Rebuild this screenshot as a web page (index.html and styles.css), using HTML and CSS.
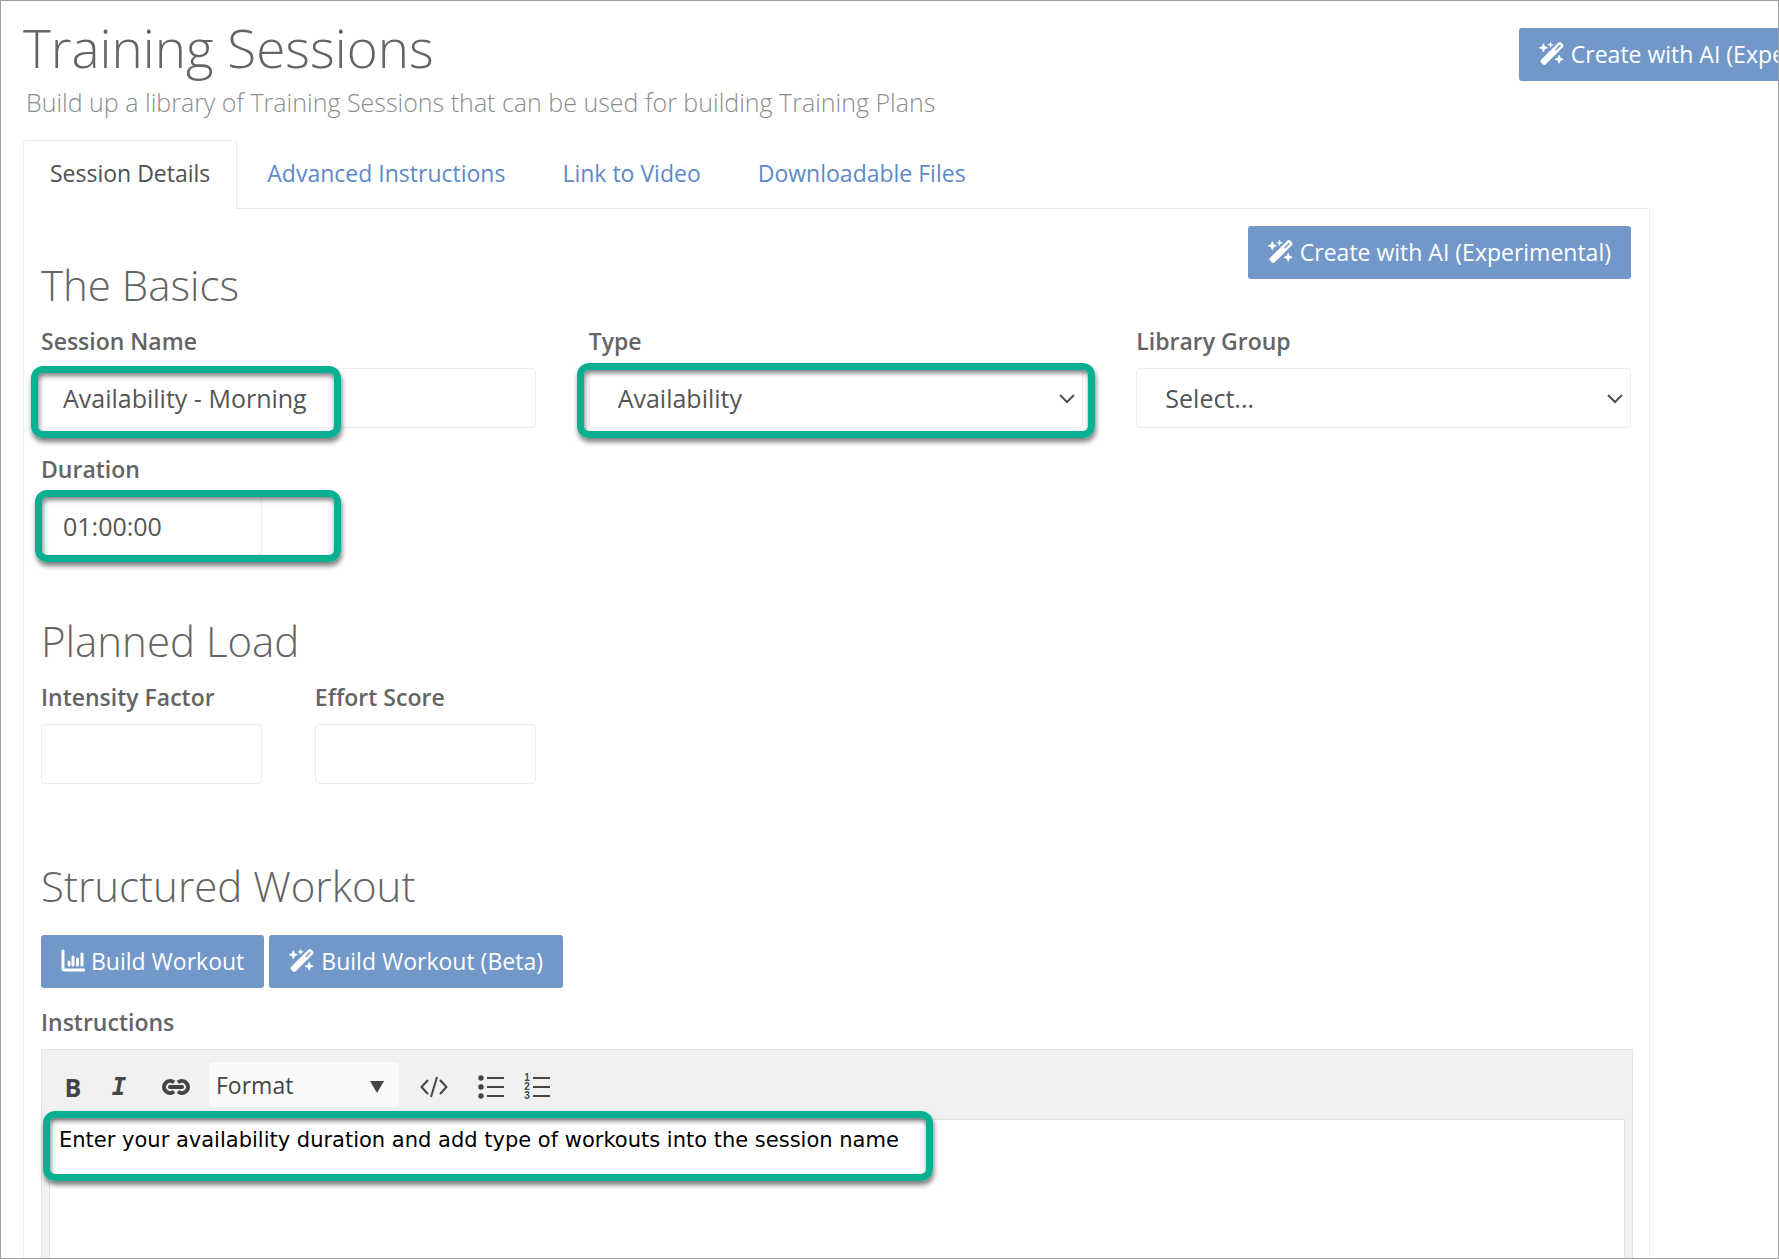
FILE: index.html
```html
<!DOCTYPE html>
<html lang="en">
<head>
    <meta charset="UTF-8">
    <meta name="viewport" content="width=device-width, initial-scale=1.0">
    <title>Training Sessions</title>
    <link rel="stylesheet" href="styles.css">
</head>
<body>
    <!-- shared icons -->
    <svg class="sprite" aria-hidden="true">
        <symbol id="wand" viewBox="0 0 576 512">
            <path d="M234.7 42.7L197 56.8c-3 1.1-5 4-5 7.2s2 6.1 5 7.2l37.7 14.1L248.8 123c1.1 3 4 5 7.2 5s6.1-2 7.2-5l14.1-37.7L315 71.2c3-1.1 5-4 5-7.2s-2-6.1-5-7.2L277.3 42.7 263.2 5c-1.1-3-4-5-7.2-5s-6.1 2-7.2 5L234.7 42.7zM46.1 395.4c-18.7 18.7-18.7 49.1 0 67.9l34.6 34.6c18.7 18.7 49.1 18.7 67.9 0L529.9 116.5c18.7-18.7 18.7-49.1 0-67.9L495.3 14.1c-18.7-18.7-49.1-18.7-67.9 0L46.1 395.4zM484.6 82.6l-105 105-23.3-23.3 105-105 23.3 23.3zM7.5 117.2C3 118.9 0 123.2 0 128s3 9.1 7.5 10.8L64 160l21.2 56.5c1.7 4.5 6 7.5 10.8 7.5s9.1-3 10.8-7.5L128 160l56.5-21.2c4.5-1.7 7.5-6 7.5-10.8s-3-9.1-7.5-10.8L128 96 106.8 39.5C105.1 35 100.8 32 96 32s-9.1 3-10.8 7.5L64 96 7.5 117.2zm352 256c-4.5 1.7-7.5 6-7.5 10.8s3 9.1 7.5 10.8L416 416l21.2 56.5c1.7 4.5 6 7.5 10.8 7.5s9.1-3 10.8-7.5L480 416l56.5-21.2c4.5-1.7 7.5-6 7.5-10.8s-3-9.1-7.5-10.8L480 352l-21.2-56.5c-1.7-4.5-6-7.5-10.8-7.5s-9.1 3-10.8 7.5L416 352l-56.5 21.2z"/>
        </symbol>
        <symbol id="chart" viewBox="0 0 24 24">
            <path d="M2 2v17.5a1.5 1.5 0 0 0 1.500 1.500H23" fill="none" stroke="currentColor" stroke-width="3" stroke-linecap="round"/>
            <path d="M8 13v3M12 8v8M16.500 10v6M21 5v11" fill="none" stroke="currentColor" stroke-width="3" stroke-linecap="round"/>
        </symbol>
    </svg>

    <div class="page">
        <header class="page-header">
            <div>
                <h1>Training Sessions</h1>
                <p class="subtitle">Build up a library of Training Sessions that can be used for building Training Plans</p>
            </div>
            <button type="button" class="btn"><svg class="icon-wand"><use href="#wand"/></svg>Create with AI (Experimental)</button>
        </header>

        <main class="content">
            <nav class="tabs">
                <a href="#details" class="tab active">Session Details</a>
                <a href="#advanced" class="tab">Advanced Instructions</a>
                <a href="#video" class="tab">Link to Video</a>
                <a href="#files" class="tab">Downloadable Files</a>
            </nav>

            <form class="panel" id="details">
                <section>
                    <div class="section-head">
                        <h2>The Basics</h2>
                        <button type="button" class="btn"><svg class="icon-wand"><use href="#wand"/></svg>Create with AI (Experimental)</button>
                    </div>
                    <div class="row">
                        <div class="field">
                            <label for="name">Session Name</label>
                            <div class="control">
                                <input type="text" id="name" value="Availability - Morning">
                                <span class="highlight hl-name"></span>
                            </div>
                        </div>
                        <div class="field">
                            <label for="type">Type</label>
                            <div class="control">
                                <select id="type"><option>Availability</option></select>
                                <svg class="chevron" viewBox="0 0 16 10"><path d="M1 1l7 7 7-7"/></svg>
                                <span class="highlight hl-type"></span>
                            </div>
                        </div>
                        <div class="field">
                            <label for="group">Library Group</label>
                            <div class="control">
                                <select id="group"><option>Select...</option></select>
                                <svg class="chevron" viewBox="0 0 16 10"><path d="M1 1l7 7 7-7"/></svg>
                            </div>
                        </div>
                        <div class="field half">
                            <label for="duration">Duration</label>
                            <div class="control">
                                <input type="text" id="duration" value="01:00:00">
                                <span class="highlight hl-duration"></span>
                            </div>
                        </div>
                    </div>
                </section>

                <section class="load">
                    <h2>Planned Load</h2>
                    <div class="row">
                        <div class="pair">
                            <div class="field">
                                <label for="intensity">Intensity Factor</label>
                                <input type="text" id="intensity">
                            </div>
                            <div class="field">
                                <label for="effort">Effort Score</label>
                                <input type="text" id="effort">
                            </div>
                        </div>
                    </div>
                </section>

                <section class="workout">
                    <h2>Structured Workout</h2>
                    <div class="buttons">
                        <button type="button" class="btn"><svg class="icon-chart"><use href="#chart"/></svg>Build Workout</button>
                        <button type="button" class="btn"><svg class="icon-wand"><use href="#wand"/></svg>Build Workout (Beta)</button>
                    </div>
                    <label for="instructions">Instructions</label>
                    <div class="editor">
                        <div class="toolbar">
                            <button type="button" class="tool" aria-label="Bold"><b>B</b></button>
                            <button type="button" class="tool" aria-label="Italic"><i>I</i></button>
                            <button type="button" class="tool tool-link" aria-label="Link">
                                <svg width="28" height="16" viewBox="0 0 28 16" fill="none" stroke="currentColor" stroke-width="4"><path d="M12 3.5A6 6 0 1 0 12 12.5M16 3.5A6 6 0 1 1 16 12.5"/><path d="M8 8h12" stroke-linecap="round"/></svg>
                            </button>
                            <div class="format">
                                <select aria-label="Format"><option>Format</option></select>
                                <svg class="arrow" viewBox="0 0 14 12"><path d="M0 0h14L7 12z"/></svg>
                            </div>
                            <button type="button" class="tool tool-code" aria-label="Source">
                                <svg width="28" height="22" viewBox="0 0 28 22" fill="none" stroke="currentColor" stroke-width="2"><path d="M8 4L1.5 11 8 18M20 4l6.5 7-6.5 7M17 1l-6 20"/></svg>
                            </button>
                            <button type="button" class="tool" aria-label="Bulleted list">
                                <svg width="26" height="24" viewBox="0 0 26 24" fill="currentColor"><circle cx="3" cy="3" r="2.700"/><circle cx="3" cy="12" r="2.700"/><circle cx="3" cy="21" r="2.700"/><path d="M9 2h17v2H9zM9 11h17v2H9zM9 20h17v2H9z"/></svg>
                            </button>
                            <button type="button" class="tool" aria-label="Numbered list">
                                <span class="nums"><span>1</span><span>2</span><span>3</span></span>
                                <svg width="17" height="24" viewBox="9 0 17 24" fill="currentColor"><path d="M9 2h17v2H9zM9 11h17v2H9zM9 20h17v2H9z"/></svg>
                            </button>
                        </div>
                        <div class="control">
                            <textarea id="instructions" rows="10">Enter your availability duration and add type of workouts into the session name</textarea>
                            <span class="highlight hl-text"></span>
                        </div>
                    </div>
                </section>
            </form>
        </main>
    </div>
</body>
</html>
```
FILE: styles.css
```css
* {
    box-sizing: border-box;
}
body {
    margin: 0;
    background-color: #fff;
    color: #646464;
    font-family: "Open Sans", Arial, sans-serif;
    font-size: 23px;
    line-height: 32px;
}
h1, h2, p {
    margin: 0;
    font-weight: 300;
}
h1 {
    font-size: 53px;
    line-height: 60px;
}
h2 {
    font-size: 42px;
    line-height: 48px;
    margin-bottom: 16px;
}
input, select, textarea, button {
    font-family: inherit;
    font-size: inherit;
    color: inherit;
}
.sprite {
    display: none;
}
.page {
    height: 100vh;
    overflow: hidden;
    border: 1px solid #a0a0a0;
}

/* header */
.page-header {
    display: flex;
    justify-content: space-between;
    align-items: flex-start;
    padding: 17px 0 22px 22px;
    margin-right: -124px;
}
.page-header .btn {
    margin-top: 10px;
}
.page-header > div {
    flex: 1;
}
.subtitle {
    margin-top: 8px;
    padding-left: 3px;
    font-size: 25px;
    color: #8c8c8c;
}

.btn {
    display: inline-flex;
    align-items: center;
    gap: 6px;
    height: 53px;
    padding: 0 20px 2px;
    border: none;
    border-radius: 3px;
    background-color: #7298c9;
    color: #fff;
    white-space: nowrap;
    cursor: pointer;
}
.icon-wand {
    width: 26px;
    height: 23px;
    fill: currentColor;
}
.icon-chart {
    width: 24px;
    height: 24px;
}

/* tabs */
.content {
    margin: 0 128px 0 22px;
}
.tabs {
    display: flex;
    gap: 3px;
}
.tab {
    padding: 16px 26px 19px;
    border: 1px solid transparent;
    border-bottom: none;
    color: #5d8ac7;
    text-decoration: none;
}
.tab.active {
    position: relative;
    margin-bottom: -1px;
    padding-bottom: 20px;
    border-color: #ededed;
    border-radius: 4px 4px 0 0;
    background-color: #fff;
    color: #505050;
}
.panel {
    padding: 17px 18px 17px 17px;
    border: 1px solid #ededed;
}

/* form */
.section-head {
    display: flex;
    justify-content: space-between;
    align-items: flex-start;
}
.section-head h2 {
    margin-top: 35px;
}
.load {
    margin-top: 61px;
}
.workout {
    margin-top: 78px;
}
.row {
    display: grid;
    grid-template-columns: repeat(3, 1fr);
    gap: 25px 53px;
}
.pair {
    display: grid;
    grid-template-columns: 1fr 1fr;
    gap: 53px;
}
label {
    display: block;
    margin-bottom: 11px;
    font-weight: 600;
}
.control {
    position: relative;
}
.field input, .field select {
    display: block;
    width: 100%;
    height: 60px;
    padding: 0 21px;
    border: 1px solid #ededed;
    border-radius: 4px;
    background-color: #fff;
    font-size: 25px;
    color: #555;
    appearance: none;
}
.field select {
    padding-left: 28px;
}
.half input {
    width: calc(50% - 26px);
}
.chevron {
    position: absolute;
    right: 8px;
    top: 26px;
    width: 16px;
    height: 10px;
    fill: none;
    stroke: #505050;
    stroke-width: 2;
    pointer-events: none;
}
.buttons {
    display: flex;
    gap: 5px;
    margin: 25px 0 18px;
}

/* green marker boxes over the fields */
.highlight {
    position: absolute;
    border: 7px solid #08af90;
    border-radius: 12px;
    box-shadow: 1px 4px 5px rgba(0, 0, 0, 0.5), inset 1px 3px 5px rgba(0, 0, 0, 0.5);
    pointer-events: none;
}
.hl-name {
    left: -10px;
    top: -2px;
    width: 310px;
    height: 72px;
}
.hl-type {
    left: -12px;
    right: -12px;
    top: -5px;
    height: 75px;
}
.hl-duration {
    left: -6px;
    top: -6px;
    width: 306px;
    height: 72px;
}
.hl-text {
    left: -6px;
    top: -8px;
    width: 890px;
    height: 70px;
}

/* editor */
.editor {
    margin-right: -2px;
    padding: 0 7px 7px;
    border: 1px solid #e3e3e3;
    background-color: #f1f1f1;
    color: #444;
}
.toolbar {
    display: flex;
    align-items: center;
    height: 69px;
    padding: 0 1px;
}
.tool {
    display: flex;
    align-items: center;
    justify-content: center;
    gap: 3px;
    width: 46px;
    height: 44px;
    margin-top: 4px;
    padding: 0;
    border: none;
    background: none;
}
.tool b {
    font-size: 25px;
}
.tool i {
    font-family: "DejaVu Sans Mono", monospace;
    font-size: 24px;
    font-weight: 700;
}
.tool-link {
    width: 67px;
}
.tool-code {
    width: 69px;
}
.format {
    position: relative;
    width: 190px;
}
.format select {
    display: block;
    width: 100%;
    height: 45px;
    padding: 0 7px;
    border: none;
    border-radius: 3px;
    background-color: #fafafa;
    appearance: none;
}
.arrow {
    position: absolute;
    right: 15px;
    top: 19px;
    width: 14px;
    height: 12px;
    fill: #444;
    pointer-events: none;
}
.nums {
    display: flex;
    flex-direction: column;
    font-family: "Liberation Sans", Arial, sans-serif;
    font-size: 10px;
    font-weight: 700;
    line-height: 9px;
}
textarea {
    display: block;
    width: 100%;
    padding: 4px 9px;
    border: 1px solid #e3e3e3;
    background-color: #fff;
    font-family: "DejaVu Sans", Verdana, sans-serif;
    font-size: 21px;
    line-height: 32px;
    color: #000;
    resize: none;
}
```
